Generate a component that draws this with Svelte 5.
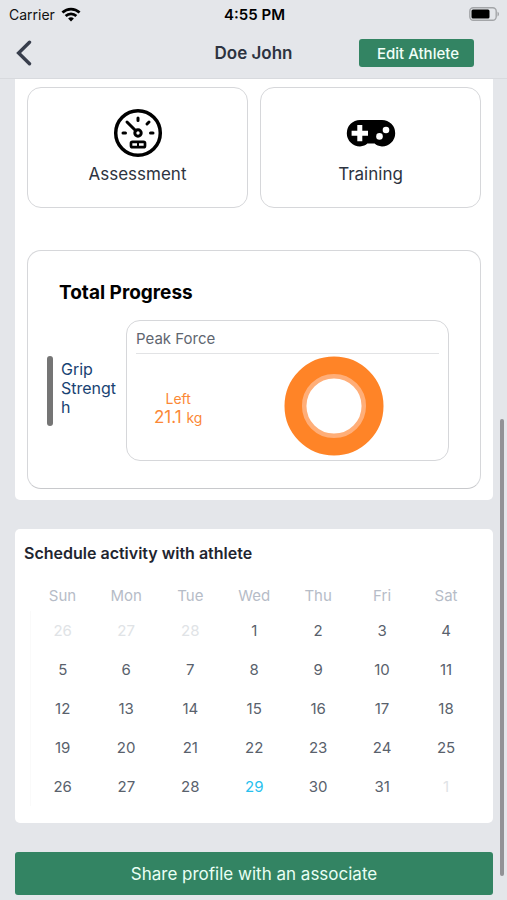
<script>
  const weekdays = ['Sun', 'Mon', 'Tue', 'Wed', 'Thu', 'Fri', 'Sat']
  const daysInMonth = 31
  const today = 29

  // Leading days come from the previous month, trailing ones from the next
  const cells = [
    ...[26, 27, 28].map((day) => ({ day, outside: true })),
    ...Array.from({ length: daysInMonth }, (_, i) => ({ day: i + 1, outside: false })),
    { day: 1, outside: true }
  ]

  const weeks = []
  for (let i = 0; i < cells.length; i += 7) {
    weeks.push(cells.slice(i, i + 7))
  }

  let athlete = $state('Doe John')
  let force = $state(21.1)
</script>

<div class="screen">
  <header class="topbar">
    <div class="status">
      <div class="carrier">
        <span>Carrier</span>
        <svg width="20" height="15" viewBox="0 0 18 14" fill="none" stroke="#000" stroke-width="2.5">
          <path d="M1 5.2C5.6 .8 12.4 .8 17 5.2"/>
          <path d="M4 8.4C6.8 5.7 11.2 5.7 14 8.4"/>
          <path d="M6.3 10.7C7.9 9.3 10.1 9.3 11.7 10.7L9 13.6z" fill="#000" stroke="none"/>
        </svg>
      </div>
      <span class="time">4:55 PM</span>
      <svg class="battery" width="31" height="14" viewBox="0 0 31 14">
        <rect x=".8" y=".8" width="26.4" height="12.4" rx="3.5" fill="none" stroke="#a3a5a8" stroke-width="1.4"/>
        <rect x="2.5" y="2.5" width="18" height="9" rx="1.5" fill="#000"/>
        <path d="M28.5 4.7c2 .7 2 4 0 4.7z" fill="#a3a5a8"/>
      </svg>
    </div>
    <nav class="nav">
      <button type="button" class="back" aria-label="Back">
        <svg width="16" height="26" viewBox="0 0 16 26" fill="none" stroke="currentColor" stroke-width="3.4" stroke-linecap="round">
          <path d="M13.5 2.2L2.6 13l10.9 10.8"/>
        </svg>
      </button>
      <h1>{athlete}</h1>
      <button type="button" class="edit">Edit Athlete</button>
    </nav>
  </header>

  <main>
    <section class="card overview">
      <div class="tiles">
        <button type="button" class="tile">
          <svg width="50" height="50" viewBox="0 0 50 50" fill="none" stroke="#000" stroke-width="3" stroke-linecap="round">
            <circle cx="25" cy="25" r="22.3" stroke-width="3.5"/>
            <circle cx="25" cy="25" r="3.2"/>
            <path d="M22.5 22.5L14 14"/>
            <path d="M25 10v2.5M36 14l-2 2M10 25h2.5M37.5 25H40"/>
            <rect x="18" y="33.8" width="14" height="5.4" rx="1.5" stroke-width="2.7"/>
            <path d="M25 34v5" stroke-width="2"/>
          </svg>
          <span>Assessment</span>
        </button>
        <button type="button" class="tile">
          <svg width="50" height="50" viewBox="0 0 50 50">
            <path d="M14 12H36a13.2 13.2 0 0 1 0 26.4c-3.4 0-5.5-1-7.3-2.8h-7.4C19.5 37.400 17.4 38.4 14 38.4A13.2 13.2 0 0 1 14 12z"/>
            <path d="M11.3 17h5v5.7H22v5h-5.7v5.6h-5v-5.6H5.6v-5h5.700z" fill="#fff"/>
            <circle cx="40" cy="22" r="3.3" fill="#fff"/>
            <circle cx="33.5" cy="28.4" r="3.3" fill="#fff"/>
          </svg>
          <span>Training</span>
        </button>
      </div>

      <div class="progress">
        <h2>Total Progress</h2>
        <div class="progress-row">
          <div class="metric">
            <span>Grip Strength</span>
          </div>
          <div class="chart-card">
            <h3>Peak Force</h3>
            <div class="chart-body">
              <div class="reading">
                <span class="side">Left</span>
                <span class="value">{force} <small>kg</small></span>
              </div>
              <svg width="100" height="100" viewBox="0 0 100 100" fill="none">
                <circle cx="50" cy="50" r="40" stroke="#ff8427" stroke-width="19"/>
                <circle cx="50" cy="50" r="29.8" stroke="#ffae78" stroke-width="4.5"/>
              </svg>
            </div>
          </div>
        </div>
      </div>
    </section>

    <section class="card schedule">
      <h2>Schedule activity with athlete</h2>
      <table>
        <thead>
          <tr>
            {#each weekdays as weekday}
              <th scope="col">{weekday}</th>
            {/each}
          </tr>
        </thead>
        <tbody>
          {#each weeks as week}
            <tr>
              {#each week as cell}
                <td>
                  <button
                    type="button"
                    class="day"
                    class:outside={cell.outside}
                    class:today={!cell.outside && cell.day === today}
                  >{cell.day}</button>
                </td>
              {/each}
            </tr>
          {/each}
        </tbody>
      </table>
    </section>

    <button type="button" class="share">Share profile with an associate</button>
  </main>

  <div class="scroll-thumb"></div>
</div>

<style>
  :global(body) {
    margin: 0;
    background: #e4e6ea;
  }

  .screen {
    min-height: 100vh;
    font-family: Inter, Roboto, sans-serif;
    color: #2d3340;
  }

  button {
    margin: 0;
    padding: 0;
    border: none;
    background: none;
    font: inherit;
    color: inherit;
    cursor: pointer;
  }

  h1,
  h2,
  h3 {
    margin: 0;
  }

  .topbar {
    position: sticky;
    top: 0;
    z-index: 1;
    background: #e4e6ea;
    border-bottom: 1px solid #d8dade;
  }

  .status,
  .nav {
    display: grid;
    grid-template-columns: 1fr auto 1fr;
    align-items: center;
  }

  .status {
    height: 28px;
    padding: 0 7px 0 9px;
    color: #111;
  }

  .carrier {
    display: flex;
    align-items: center;
    gap: 6px;
    font-size: 14px;
  }

  .time {
    font-size: 15px;
    font-weight: 600;
    color: #000;
  }

  .battery {
    justify-self: end;
  }

  .nav {
    height: 50px;
    padding: 0 16px;
  }

  .back {
    display: flex;
    justify-self: start;
    color: #383e4c;
  }

  .nav h1 {
    font-size: 17px;
    font-weight: 600;
  }

  .edit {
    justify-self: end;
    height: 28px;
    margin-right: 17px;
    padding: 0 15px 0 18px;
    border-radius: 3px;
    background: #338463;
    color: #f1fff8;
    font-size: 15px;
    font-weight: 500;
    white-space: nowrap;
  }

  main {
    display: flex;
    flex-direction: column;
    gap: 29px;
    padding: 0 14px 5px 15px;
  }

  .card {
    background: #fff;
    border-radius: 5px;
  }

  .overview {
    padding: 8px 12px 11px;
    border-radius: 0 0 5px 5px;
  }

  .tiles {
    display: grid;
    grid-template-columns: 1fr 1fr;
    gap: 12px;
    margin-bottom: 42px;
  }

  .tile {
    display: flex;
    flex-direction: column;
    align-items: center;
    gap: 4px;
    height: 121px;
    padding-top: 20px;
    border: 1px solid #d6d7da;
    border-radius: 14px;
    font-size: 17px;
    line-height: 24px;
  }

  .progress {
    padding: 30px 31px 27px 19px;
    border: 1px solid #d6d7da;
    border-bottom-color: #c8c9cc;
    border-radius: 14px;
  }

  .progress h2 {
    padding-left: 12px;
    margin-bottom: 15px;
    font-size: 19px;
    font-weight: 700;
    line-height: 24px;
    color: #000;
  }

  .progress-row {
    display: flex;
    align-items: center;
    gap: 5px;
  }

  .metric {
    display: flex;
    align-items: center;
    position: relative;
    box-sizing: border-box;
    width: 74px;
    height: 70px;
    padding: 0 0 4px 14px;
    font-size: 16px;
    line-height: 19px;
    color: #194373;
    overflow-wrap: anywhere;
  }

  .metric::before {
    content: '';
    position: absolute;
    left: 0;
    top: 0;
    bottom: 0;
    width: 6px;
    border-radius: 3px;
    background: #757575;
  }

  .chart-card {
    flex: 1;
    min-width: 0;
    box-sizing: border-box;
    height: 141px;
    padding: 6px 9px 0;
    border: 1px solid #d6d7da;
    border-radius: 14px;
  }

  .chart-card h3 {
    padding-bottom: 2px;
    border-bottom: 1px solid #e2e3e5;
    font-size: 15px;
    font-weight: 400;
    line-height: 24px;
    color: #5f6670;
  }

  .chart-body {
    display: flex;
    align-items: center;
    justify-content: space-between;
    padding: 2px 55px 0 18px;
  }

  .reading {
    display: flex;
    flex-direction: column;
    align-items: center;
    padding-top: 4px;
    color: #fb8836;
    line-height: 19px;
  }

  .side,
  .value small {
    font-size: 14px;
  }

  .value {
    font-size: 17px;
  }

  .schedule {
    padding: 12px 15px 17px;
  }

  .schedule h2 {
    margin: 0 -6px 18px;
    font-size: 16px;
    font-weight: 600;
    line-height: 24px;
    color: #1f2530;
  }

  table {
    width: 100%;
    table-layout: fixed;
    border-collapse: collapse;
    font-size: 15px;
  }

  th {
    height: 28px;
    padding: 0;
    font-weight: 400;
    line-height: 25px;
    vertical-align: top;
    color: #b6bcc7;
  }

  tbody {
    border-left: 1px solid #fafafa;
  }

  td {
    height: 39px;
    padding: 0;
    text-align: center;
  }

  .day {
    width: 32px;
    height: 32px;
    color: #59616c;
  }

  .day.outside {
    color: #e0e3e6;
  }

  .day.today {
    color: #28c0ee;
  }

  .share {
    height: 43px;
    border-radius: 3px;
    background: #338463;
    color: #e9fff4;
    font-size: 17px;
  }

  /* Overlay scroll indicator */
  .scroll-thumb {
    position: fixed;
    right: 3px;
    top: 46.6%;
    bottom: 2.7%;
    width: 4px;
    border-radius: 2px;
    background: #929296;
    z-index: 2;
  }
</style>
